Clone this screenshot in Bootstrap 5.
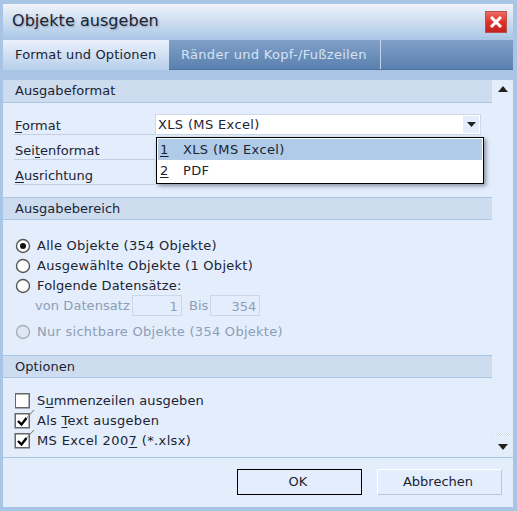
<!DOCTYPE html>
<html lang="de">
<head>
  <meta charset="UTF-8" />
  <title>Objekte ausgeben</title>
  <link href="https://cdn.jsdelivr.net/npm/bootstrap@5.3.0/dist/css/bootstrap.min.css" rel="stylesheet" />
  <style>
    html, body { height: 511px; overflow: hidden; }
    body {
      background: #a8c5e6;
      color: #1b2433;
      font-family: "DejaVu Sans", Verdana, sans-serif;
      font-size: 13px;
      line-height: 20px;
      padding: 4px 4px 4px 3px;
    }
    .dlg { height: 503px; background: #e3edfc; }
    .dlg-title {
      height: 36px;
      padding: 0 6px 3px 9px;
      font-size: 16px;
      letter-spacing: .05px;
      background: linear-gradient(#f0f4fa, #a9c6e6);
      text-shadow: 1px 1px 2px rgba(60, 80, 110, .4);
    }
    .close-x {
      width: 22px;
      height: 22px;
      margin-top: 3px;
      background: linear-gradient(#ec6a62, #e2302a 50%, #c5231f);
      border: 1px solid #b9504c;
    }
    .tab-bar {
      height: 30px;
      background: linear-gradient(#7f9fc8, #5b81af);
      color: #d5e3f3;
      border-bottom: 1px solid #4f739f;
      letter-spacing: .3px;
      white-space: nowrap;
    }
    .tab-item { padding: 0 13px 0 12px; border-right: 1px solid #c3d4e8; }
    .tab-item.on {
      width: 166px;
      flex: none;
      padding-right: 0;
      color: #1b2433;
      background: linear-gradient(#eaf1fb, #b6cfea);
      border: 0;
      height: 30px;
      letter-spacing: .15px;
    }
    .tab-strip { height: 10px; background: #a8c5e6; }
    .dlg-mid { height: 377px; }
    .pane { width: 489px; }
    .sec-head {
      height: 23px;
      padding-left: 12px;
      background: #cddcef;
      border-bottom: 1px solid #a9c6e6;
      line-height: 21px;
      letter-spacing: .05px;
    }
    .sec-head.gap { border-top: 1px solid #a9c6e6; }
    .sec-body { padding: 12px 0 0 11px; }
    .form-body { padding-top: 7px; }
    .form-line {
      height: 25px;
      border-bottom: 1px solid #c2d0e2;
      width: 141px;
      line-height: 32px;
      padding-left: 1px;
    }
    .fmt-field { position: relative; }
    .fmt-input {
      position: absolute;
      left: 152px;
      top: 11px;
      width: 326px;
      height: 21px;
      padding-left: 2px;
      background: #fff;
      border: 1px solid #cdd9e9;
      line-height: 19px;
      letter-spacing: .35px;
    }
    .drop-btn { width: 16px; height: 17px; margin: 1px; background: #e3edfc; }
    .fmt-pop {
      position: absolute;
      left: 153px;
      top: 34px;
      width: 328px;
      height: 47px;
      background: #fff;
      border: 1px solid #000;
      padding: 1px;
      box-shadow: 2px 2px 4px rgba(40, 50, 70, .5);
      z-index: 5;
      letter-spacing: .35px;
    }
    .pop-row { height: 21px; line-height: 21px; padding-left: 2px; }
    .pop-row.sel { background: #b0cbe8; width: 100%; }
    .pop-num { width: 23px; }
    .opt-row { height: 20px; gap: 6px; padding-left: 1px; letter-spacing: .27px; }
    .opt-row.off { color: #8d9db7; }
    .opt-row.tight { letter-spacing: .13px; }
    .opt-row.wide { letter-spacing: .38px; }
    .ico-slot { width: 16px; height: 16px; flex: none; }
    .range-row { height: 21px; padding-left: 21px; color: #8d9db7; margin: -1px 0 6px; letter-spacing: .07px; }
    .num-box {
      width: 50px;
      height: 21px;
      margin: 0 2px;
      padding-right: 3px;
      text-align: right;
      border: 1px solid #ccd7e6;
      line-height: 21px;
    }
    .bis-txt { margin-left: 5px; }
    .gap-top { padding-top: 8px; }
    .gap-bottom { padding-bottom: 13px; }
    .gap-opt { padding-top: 13px; }
    .sec-first { margin-top: 12px; }
    .scroll-col { width: 21px; padding: 6px 0 7px; }
    .scroll-thumb {
      width: 100%;
      height: 3px;
      margin: auto 0 8px;
      background: repeating-conic-gradient(#fff 0 25%, #c6d6ea 0 50%) 0 0 / 2px 2px;
    }
    .dlg-foot {
      border-top: 1px solid #a9c6e6;
      padding: 11px 11px 0 0;
      gap: 15px;
    }
    .foot-btn {
      width: 125px;
      height: 26px;
      padding: 0 3px 0 0;
      font-size: 13px;
      line-height: 22px;
      color: #1b2433;
      background: #e3edfc;
      border: 1px solid #000;
      border-radius: 0;
    }
    .foot-btn.plain {
      border-color: #fff #b9c6d8 #b9c6d8 #fff;
    }
    u { text-underline-offset: 2px; }
  </style>
</head>
<body>
  <div class="dlg d-flex flex-column">
    <div class="dlg-title d-flex align-items-center justify-content-between">
      <span>Objekte ausgeben</span>
      <span class="close-x d-flex align-items-center justify-content-center">
        <svg width="14" height="12" viewBox="0 0 14 12"><path d="M2 1 12 11M12 1 2 11" stroke="#fff" stroke-width="3"/></svg>
      </span>
    </div>

    <div class="tab-bar d-flex align-items-center">
      <div class="tab-item on d-flex align-items-center">Format und Optionen</div>
      <div class="tab-item d-flex align-items-center h-100">Ränder und Kopf-/Fußzeilen</div>
    </div>
    <div class="tab-strip"></div>

    <div class="dlg-mid d-flex">
      <div class="pane">
        <div class="sec-head">Ausgabeformat</div>
        <div class="sec-body form-body fmt-field">
          <div class="form-line"><u>F</u>ormat</div>
          <div class="form-line">Sei<u>t</u>enformat</div>
          <div class="form-line"><u>A</u>usrichtung</div>
          <div class="fmt-input d-flex justify-content-between">
            <span>XLS (MS Excel)</span>
            <span class="drop-btn d-flex align-items-center justify-content-center">
              <svg width="9" height="5" viewBox="0 0 9 5"><path d="M0 0h9L4.5 5z" fill="#222"/></svg>
            </span>
          </div>
          <div class="fmt-pop">
            <div class="pop-row sel d-flex"><span class="pop-num"><u>1</u></span>XLS (MS Excel)</div>
            <div class="pop-row d-flex"><span class="pop-num"><u>2</u></span>PDF</div>
          </div>
        </div>

        <div class="sec-head gap sec-first">Ausgabebereich</div>
        <div class="sec-body gap-top gap-bottom">
          <div class="pt-2"></div>
          <div class="opt-row d-flex align-items-center">
            <svg class="ico-slot" viewBox="0 0 16 16"><circle cx="8" cy="8" r="6.5" fill="#fff" stroke="#555" stroke-width="1.4"/><circle cx="8" cy="8" r="3" fill="#111"/></svg>
            <span>Alle Objekte (354 Objekte)</span>
          </div>
          <div class="opt-row d-flex align-items-center">
            <svg class="ico-slot" viewBox="0 0 16 16"><circle cx="8" cy="8" r="6.5" fill="#fff" stroke="#555" stroke-width="1.4"/></svg>
            <span>Ausgewählte Objekte (1 Objekt)</span>
          </div>
          <div class="opt-row tight d-flex align-items-center">
            <svg class="ico-slot" viewBox="0 0 16 16"><circle cx="8" cy="8" r="6.5" fill="#fff" stroke="#555" stroke-width="1.4"/></svg>
            <span>Folgende Datensätze:</span>
          </div>
          <div class="range-row d-flex align-items-center">
            <span>von Datensatz</span><span class="num-box">1</span>
            <span class="bis-txt">Bis</span><span class="num-box">354</span>
          </div>
          <div class="opt-row off d-flex align-items-center">
            <svg class="ico-slot" viewBox="0 0 16 16"><circle cx="8" cy="8" r="6.5" fill="#dfe7f3" stroke="#a5afbd" stroke-width="1.4"/></svg>
            <span>Nur sichtbare Objekte (354 Objekte)</span>
          </div>
        </div>

        <div class="sec-head gap">Optionen</div>
        <div class="sec-body gap-opt">
          <div class="opt-row tight d-flex align-items-center">
            <svg class="ico-slot" viewBox="0 0 16 16"><rect x=".25" y=".75" width="14" height="14" fill="#fff" stroke="#666" stroke-width="1.5"/></svg>
            <span>S<u>u</u>mmenzeilen ausgeben</span>
          </div>
          <div class="opt-row d-flex align-items-center">
            <svg class="ico-slot" viewBox="0 0 16 16" overflow="visible"><rect x=".25" y=".75" width="14" height="14" fill="#fff" stroke="#666" stroke-width="1.5"/><path d="M3 8 6.5 11.5 11.5 5" fill="none" stroke="#000" stroke-width="2.4"/><path d="M11.5 5 19 -3" fill="none" stroke="#777" stroke-width="1"/></svg>
            <span>Als <u>T</u>ext ausgeben</span>
          </div>
          <div class="opt-row wide d-flex align-items-center">
            <svg class="ico-slot" viewBox="0 0 16 16" overflow="visible"><rect x=".25" y=".75" width="14" height="14" fill="#fff" stroke="#666" stroke-width="1.5"/><path d="M3 8 6.5 11.5 11.5 5" fill="none" stroke="#000" stroke-width="2.4"/><path d="M11.5 5 19 -3" fill="none" stroke="#777" stroke-width="1"/></svg>
            <span>MS Excel 200<u>7</u> (*.xlsx)</span>
          </div>
        </div>
      </div>

      <div class="scroll-col d-flex flex-column align-items-center">
        <svg width="10" height="6" viewBox="0 0 10 6"><path d="M0 6h10L5 0z" fill="#222"/></svg>
        <div class="scroll-thumb"></div>
        <svg width="10" height="6" viewBox="0 0 10 6"><path d="M0 0h10L5 6z" fill="#222"/></svg>
      </div>
    </div>

    <div class="dlg-foot d-flex justify-content-end">
      <button class="foot-btn" type="button">OK</button>
      <button class="foot-btn plain" type="button">Abbrechen</button>
    </div>
  </div>

  <script src="https://cdn.jsdelivr.net/npm/bootstrap@5.3.0/dist/js/bootstrap.bundle.min.js"></script>
</body>
</html>
